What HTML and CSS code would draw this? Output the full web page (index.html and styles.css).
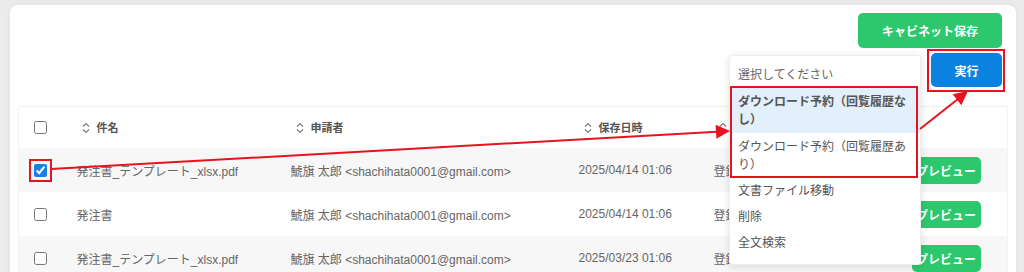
FILE: index.html
```html
<!DOCTYPE html>
<html lang="ja">
  <head>
    <meta charset="UTF-8" />
    <meta name="viewport" content="width=device-width, initial-scale=1.0" />
    <title>キャビネット</title>
    <link rel="stylesheet" href="styles.css">
  </head>
  <body>
    <div class="card">
      <div class="toolbar">
        <button class="btn btn-green">キャビネット保存</button>
        <div class="action-row">
          <div class="select-wrap">
            <div class="dropdown">
              <div class="opt placeholder">選択してください</div>
              <div class="marked">
                <div class="opt active">ダウンロード予約（回覧履歴な<br>し）</div>
                <div class="opt">ダウンロード予約（回覧履歴あ<br>り）</div>
              </div>
              <div class="opt">文書ファイル移動</div>
              <div class="opt">削除</div>
              <div class="opt">全文検索</div>
            </div>
          </div>
          <button class="btn btn-blue boxed">実行</button>
        </div>
      </div>

      <table class="doc-table">
        <colgroup>
          <col style="width: 58px" />
          <col style="width: 214px" />
          <col style="width: 288px" />
          <col style="width: 135px" />
          <col style="width: 190px" />
          <col />
        </colgroup>
        <thead>
          <tr>
            <th class="check-cell"><input type="checkbox" /></th>
            <th><span class="sort"><svg width="8" height="14" viewBox="0 0 8 14"><path d="M1 5.5 4 2.5 7 5.5M1 8.5 4 11.5 7 8.5" /></svg></span>件名</th>
            <th><span class="sort"><svg width="8" height="14" viewBox="0 0 8 14"><path d="M1 5.5 4 2.5 7 5.5M1 8.5 4 11.5 7 8.5" /></svg></span>申請者</th>
            <th><span class="sort"><svg width="8" height="14" viewBox="0 0 8 14"><path d="M1 5.5 4 2.5 7 5.5M1 8.5 4 11.5 7 8.5" /></svg></span>保存日時</th>
            <th><span class="sort"><svg width="8" height="14" viewBox="0 0 8 14"><path d="M1 5.5 4 2.5 7 5.5M1 8.5 4 11.5 7 8.5" /></svg></span>登録状況</th>
            <th></th>
          </tr>
        </thead>
        <tbody>
          <tr>
            <td class="check-cell"><span class="boxed-check"><input type="checkbox" checked /></span></td>
            <td>発注書_テンプレート_xlsx.pdf</td>
            <td>鯱旗 太郎 &lt;shachihata0001@gmail.com&gt;</td>
            <td>2025/04/14 01:06</td>
            <td>登録済み</td>
            <td><button class="btn btn-preview">プレビュー</button></td>
          </tr>
          <tr>
            <td class="check-cell"><input type="checkbox" /></td>
            <td>発注書</td>
            <td>鯱旗 太郎 &lt;shachihata0001@gmail.com&gt;</td>
            <td>2025/04/14 01:06</td>
            <td>登録済み</td>
            <td><button class="btn btn-preview">プレビュー</button></td>
          </tr>
          <tr>
            <td class="check-cell"><input type="checkbox" /></td>
            <td>発注書_テンプレート_xlsx.pdf</td>
            <td>鯱旗 太郎 &lt;shachihata0001@gmail.com&gt;</td>
            <td>2025/03/23 01:06</td>
            <td>登録済み</td>
            <td><button class="btn btn-preview">プレビュー</button></td>
          </tr>
        </tbody>
      </table>
    </div>

    <!-- 説明用の矢印 -->
    <svg class="arrows" width="1024" height="272" viewBox="0 0 1024 272">
      <line x1="51" y1="169" x2="717" y2="131.8" />
      <polygon points="730,131 716.4,138.8 715.6,124.8" />
      <line x1="920" y1="129" x2="958" y2="99" />
      <polygon points="968,91 961.4,105.2 952.7,94.2" />
    </svg>
  </body>
</html>
```

FILE: styles.css
```css
body {
  font-family: "Liberation Sans", "Noto Sans CJK JP", sans-serif;
  background-color: #ebebeb;
  margin: 0;
  padding: 0;
  position: relative;
  height: 272px;
  overflow: hidden;
}
.card {
  background: #ffffff;
  margin: 5px 8px 0 10px;
  padding: 8px 8px 0;
  border-radius: 8px;
  box-shadow: 0 0 6px rgba(0, 0, 0, 0.05);
  height: 400px;
}
.toolbar {
  display: flex;
  flex-direction: column;
  align-items: flex-end;
  padding-right: 6px;
}
.btn {
  font-family: "Liberation Sans", "Noto Sans CJK JP", sans-serif;
  color: #ffffff;
  border: none;
  border-radius: 5px;
  font-size: 12px;
  font-weight: bold;
  cursor: pointer;
}
.btn-green {
  background-color: #2dc76d;
  height: 35px;
  padding: 0 24px;
}
.btn-blue {
  background-color: #0b82e0;
  height: 34px;
  width: 71px;
}
.boxed {
  position: relative;
}
.boxed::after {
  content: "";
  position: absolute;
  top: -4px;
  left: -4px;
  right: -3px;
  bottom: -5px;
  border: 2px solid #e5141e;
}
.action-row {
  display: flex;
  gap: 10px;
  margin-top: 5px;
}
.select-wrap {
  position: relative;
  width: 192px;
  height: 34px;
}
.dropdown {
  position: absolute;
  top: 2px;
  left: 0;
  width: 192px;
  background: #ffffff;
  border: 1px solid #eeeeee;
  border-radius: 3px;
  box-sizing: border-box;
  box-shadow: 0 2px 8px rgba(0, 0, 0, 0.12);
  padding: 6px 0 8px;
  z-index: 5;
  font-size: 12px;
  color: #555555;
}
.opt {
  padding: 4px 8px;
  line-height: 18px;
  white-space: nowrap;
}
.marked .opt {
  padding: 5px 8px 4px;
}
.placeholder {
  color: #666666;
}
.opt.active {
  background-color: #e3effa;
  font-weight: bold;
}
.marked {
  position: relative;
}
.marked::after {
  content: "";
  position: absolute;
  top: -2px;
  left: 0;
  right: 2px;
  bottom: 0;
  border: 2px solid #e5141e;
}
.doc-table {
  width: 100%;
  margin-top: 19px;
  border-collapse: collapse;
  table-layout: fixed;
  font-size: 12px;
  color: #666666;
  border-left: 1px solid #f2f2f2;
  border-right: 1px solid #f2f2f2;
}
.doc-table th {
  height: 41px;
  text-align: left;
  font-size: 11px;
  font-weight: bold;
  color: #555555;
  padding: 0 0 0 5px;
  border-top: 1px solid #f0f0f0;
  white-space: nowrap;
}
.doc-table td {
  height: 44px;
  padding: 0;
  white-space: nowrap;
  overflow: hidden;
}
.doc-table tbody tr:nth-child(odd) {
  background-color: #f7f7f7;
}
.doc-table .check-cell {
  padding-left: 15px;
}
.sort {
  display: inline-block;
  vertical-align: -3px;
  margin-right: 7px;
}
.sort path {
  fill: none;
  stroke: #777777;
  stroke-width: 1.1;
}
input[type="checkbox"] {
  width: 13px;
  height: 13px;
  margin: 0;
  vertical-align: middle;
  accent-color: #1a7fe0;
}
.boxed-check {
  display: inline-block;
  line-height: 0;
  outline: 2px solid #e5141e;
  outline-offset: 3px;
}
.btn-preview {
  background-color: #2dc76d;
  height: 27px;
  width: 69px;
  padding: 0;
  margin-left: 8px;
  vertical-align: middle;
}
.arrows {
  position: absolute;
  top: 0;
  left: 0;
  z-index: 10;
  pointer-events: none;
}
.arrows line {
  stroke: #e5141e;
  stroke-width: 2;
}
.arrows polygon {
  fill: #e5141e;
}
```
